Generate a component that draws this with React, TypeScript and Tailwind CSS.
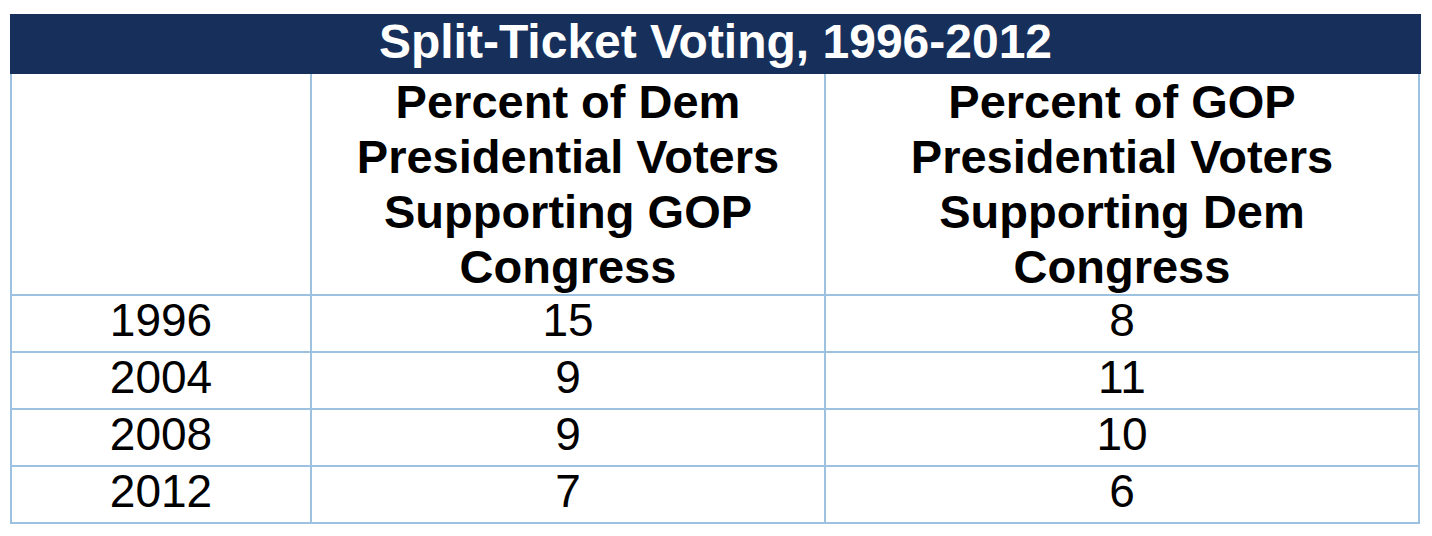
const rows = [
  { year: "1996", dem: "15", gop: "8" },
  { year: "2004", dem: "9", gop: "11" },
  { year: "2008", dem: "9", gop: "10" },
  { year: "2012", dem: "7", gop: "6" },
];

const font = { fontFamily: '"Liberation Sans", Arial, sans-serif' };

export default function App() {
  return (
    <div className="min-h-[536px] w-[1432px] bg-white pl-[10px] pt-[14px]" style={font}>
      <div className="h-[60px] w-[1411px] bg-[#16305b] text-center text-[48px] font-bold leading-[56px] text-white">
        Split-Ticket Voting, 1996-2012
      </div>
      <div className="grid w-[1410px] grid-cols-[298px_512px_592px] gap-[2px] border-x-2 border-b-2 border-[#9dc1e0] bg-[#9dc1e0] text-black">
        <div className="h-[220px] bg-white" />
        <div className="h-[220px] bg-white text-center text-[47px] font-bold leading-[55px]">
          Percent of Dem
          <br />
          Presidential Voters
          <br />
          Supporting GOP
          <br />
          Congress
        </div>
        <div className="h-[220px] bg-white text-center text-[47px] font-bold leading-[55px]">
          Percent of GOP
          <br />
          Presidential Voters
          <br />
          Supporting Dem
          <br />
          Congress
        </div>
        {rows.map((r) => (
          <div key={r.year} className="contents">
            <div className="h-[55px] bg-white text-center text-[46px] leading-[48px]">{r.year}</div>
            <div className="h-[55px] bg-white text-center text-[46px] leading-[48px]">{r.dem}</div>
            <div className="h-[55px] bg-white text-center text-[46px] leading-[48px]">{r.gop}</div>
          </div>
        ))}
      </div>
    </div>
  );
}
